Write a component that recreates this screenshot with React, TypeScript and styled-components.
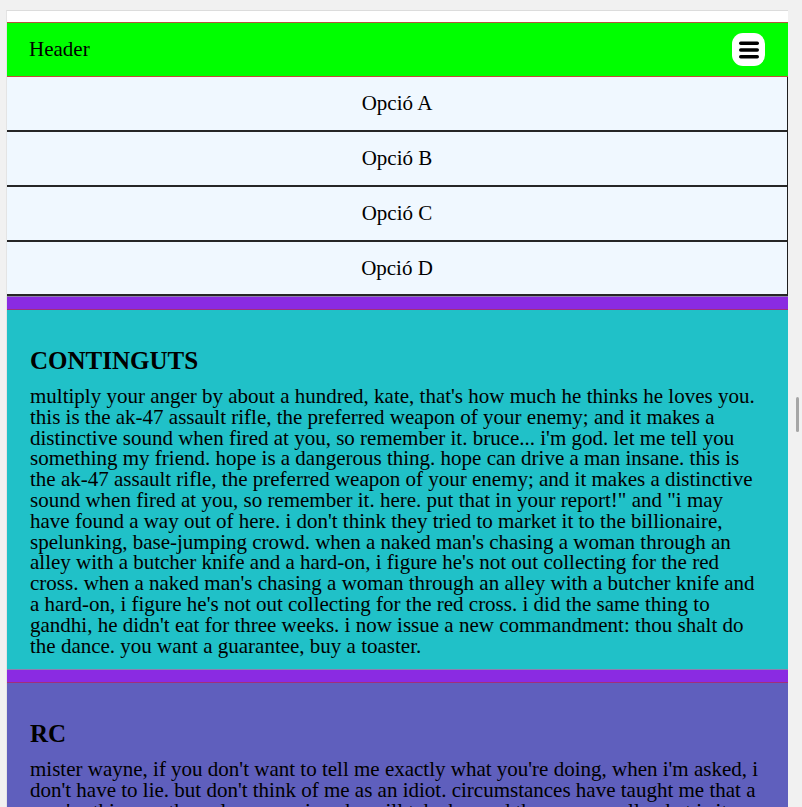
import React from "react";
import styled, { createGlobalStyle } from "styled-components";

const Global = createGlobalStyle`
  html, body {
    margin: 0;
    padding: 0;
    background: #f1f1f1;
    overflow: hidden;
  }
  body {
    font-family: "Liberation Serif", "Times New Roman", serif;
    color: #000;
  }
`;

const Page = styled.div`
  position: relative;
  height: 807px;
  padding: 10px 14px 0 6px;
  box-sizing: border-box;
`;

const Frame = styled.div`
  width: 782px;
  height: 797px;
  overflow: hidden;
  background: #ffffff;
  border-top: 1px solid #dcdcdc;
  border-left: 1px solid #e4e4e4;
  box-sizing: border-box;
  padding-top: 11px;
`;

const Header = styled.header`
  display: flex;
  align-items: center;
  justify-content: space-between;
  height: 53px;
  padding: 0 23px 0 23px;
  background: #00ff00;
  border-top: 1px solid #b8553a;
  border-bottom: 1px solid #c0503a;
  margin-left: -1px;
  font-size: 21px;
`;

const MenuButton = styled.button`
  display: flex;
  align-items: center;
  justify-content: center;
  width: 33px;
  height: 33px;
  padding: 0;
  border: none;
  border-radius: 11px;
  background: #ffffff;
  cursor: pointer;
`;

const Menu = styled.nav`
  display: flex;
  flex-direction: column;
  margin-left: -1px;
`;

const MenuItem = styled.div`
  display: flex;
  align-items: center;
  justify-content: center;
  height: 53px;
  background: #f0f8ff;
  border-left: 1px solid #1e1e1e;
  border-right: 1px solid #1e1e1e;
  border-bottom: 2px solid #262626;
  font-size: 21px;
  &:last-child {
    height: 52px;
  }
`;

const Divider = styled.div`
  height: 12px;
  background: #8a2be2;
  border-top: 1px solid #8f7fb0;
  border-bottom: 1px solid #a0307a;
  margin-left: -1px;
`;

const Section = styled.section<{ $bg: string }>`
  background: ${(p) => p.$bg};
  padding: 13px 24px 13px 24px;
  margin-left: -1px;
`;

const Title = styled.h2`
  font-size: 25px;
  font-weight: bold;
  margin: 23px 0 11px 0;
  line-height: 29px;
`;

const Body = styled.p`
  font-size: 21px;
  line-height: 20.8px;
  margin: 0;
`;

const ScrollThumb = styled.div`
  position: absolute;
  left: 796px;
  top: 397px;
  width: 3px;
  height: 35px;
  border-radius: 2px;
  background: #a6a6a6;
`;

const BarsIcon = () => (
  <svg width="20" height="18" viewBox="0 0 20 18">
    <rect x="0" y="0.5" width="20" height="3.4" rx="1.7" fill="#000" />
    <rect x="0" y="7.3" width="20" height="3.4" rx="1.7" fill="#000" />
    <rect x="0" y="14.1" width="20" height="3.4" rx="1.7" fill="#000" />
  </svg>
);

const sections = [
  {
    title: "CONTINGUTS",
    bg: "#20c1c8",
    text:
      "multiply your anger by about a hundred, kate, that's how much he thinks he loves you. this is the ak-47 assault rifle, the preferred weapon of your enemy; and it makes a distinctive sound when fired at you, so remember it. bruce... i'm god. let me tell you something my friend. hope is a dangerous thing. hope can drive a man insane. this is the ak-47 assault rifle, the preferred weapon of your enemy; and it makes a distinctive sound when fired at you, so remember it. here. put that in your report!\" and \"i may have found a way out of here. i don't think they tried to market it to the billionaire, spelunking, base-jumping crowd. when a naked man's chasing a woman through an alley with a butcher knife and a hard-on, i figure he's not out collecting for the red cross. when a naked man's chasing a woman through an alley with a butcher knife and a hard-on, i figure he's not out collecting for the red cross. i did the same thing to gandhi, he didn't eat for three weeks. i now issue a new commandment: thou shalt do the dance. you want a guarantee, buy a toaster.",
  },
  {
    title: "RC",
    bg: "#5f5fbd",
    text:
      "mister wayne, if you don't want to tell me exactly what you're doing, when i'm asked, i don't have to lie. but don't think of me as an idiot. circumstances have taught me that a man's ethics are the only possessions he will take beyond the grave. well, what is it today? more spelunking? i now issue a new commandment: thou shalt do the dance. you want a guarantee, buy a toaster. this is the ak-47 assault rifle, the preferred weapon of your enemy.",
  },
];

export default function App() {
  return (
    <>
      <Global />
      <Page>
        <Frame>
          <Header>
            <span>Header</span>
            <MenuButton aria-label="menu">
              <BarsIcon />
            </MenuButton>
          </Header>
          <Menu>
            {["A", "B", "C", "D"].map((l) => (
              <MenuItem key={l}>Opció {l}</MenuItem>
            ))}
          </Menu>
          {sections.map((s) => (
            <React.Fragment key={s.title}>
              <Divider />
              <Section $bg={s.bg}>
                <Title>{s.title}</Title>
                <Body>{s.text}</Body>
              </Section>
            </React.Fragment>
          ))}
        </Frame>
        <ScrollThumb />
      </Page>
    </>
  );
}
